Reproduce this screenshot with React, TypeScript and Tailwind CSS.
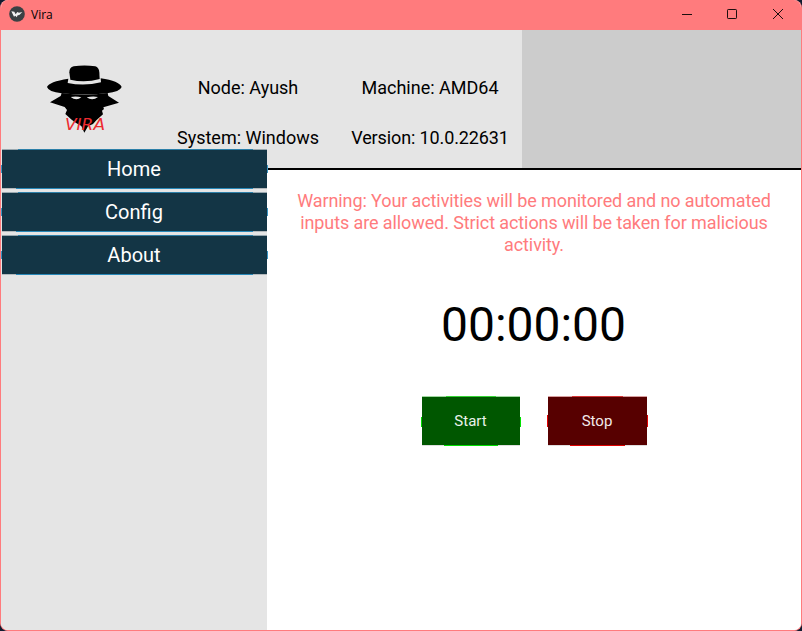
import React from "react";

const navItems = ["Home", "Config", "About"];

function KivyIcon() {
  return (
    <svg className="h-4 w-4" viewBox="0 0 48 48">
      <circle cx="24" cy="24" r="23.5" fill="#3b4144" />
      <path d="M7 16 L16 17 L20 25 L25 18 L30 20 L40 18 L31 27 L26 28 L23 34 L19 29 L15 32 Z" fill="#f2f2f2" />
    </svg>
  );
}

function SpyLogo() {
  return (
    <svg className="block h-[90px] w-[100px]" viewBox="0 0 300 270">
      <path d="M106 74 L103 52 Q103 37 116 34 Q148 29 181 34 Q192 38 193 52 L194 72 Q150 84 106 74 Z" />
      <path d="M36 96 Q42 80 100 71 L98 84 Q148 94 198 82 L197 70 Q253 78 260 96 Q255 110 215 115 Q148 122 80 115 Q40 110 36 96 Z" />
      <path d="M80 114 Q148 124 218 114 L220 123 L252 143 L205 157 L207 162 L201 167 L204 178 L184 196 L174 207 L159 214 L148 233 L139 213 L122 203 L110 194 L91 177 L96 165 L89 156 L45 142 L77 123 Z" />
      <path d="M107 126 Q124 123 139 127 Q124 139 107 126 Z M155 127 Q173 123 189 126 Q172 139 155 127 Z" fill="#e5e5e5" />
      <text x="90" y="226" textLength="120" lengthAdjust="spacingAndGlyphs" className="font-['DejaVu_Sans',sans-serif] text-[46px] italic" fill="#ed2b30">VIRA</text>
    </svg>
  );
}

function NavButton({ label }: { label: string }) {
  return (
    <button className="relative flex h-10 w-full shrink-0 items-center justify-center bg-[#133545] pr-px pb-px text-[20px] leading-6 text-white">
      <span className="absolute top-0 right-0 left-0 h-px bg-[#9aa8af]" />
      <span className="absolute top-0 right-3.5 left-4 h-px bg-[#2c7fa8]" />
      <span className="absolute right-3.5 bottom-0 left-3.5 h-px bg-[#2788b8]" />
      <span className="absolute bottom-0 left-0 h-px w-3.5 bg-[#b4b9bc]" />
      <span className="absolute right-0 bottom-0 h-px w-3.5 bg-[#b4b9bc]" />
      <span className="absolute top-4 -left-px h-2 w-px bg-[#3894c2]" />
      <span className="absolute top-4 -right-px h-2 w-px bg-[#3894c2]" />
      {label}
    </button>
  );
}

export default function App() {
  return (
    <div className="h-[631px] w-[802px] overflow-hidden bg-[#101c30] font-[Roboto,sans-serif]">
      <div className="flex h-full w-full flex-col overflow-hidden rounded-lg border-x border-b border-[#ff7b7d] bg-white">
        <header className="flex h-[30px] shrink-0 items-center justify-between bg-[#ff7b7d]">
          <div className="flex items-center gap-1.5 pb-0.5 pl-2">
            <KivyIcon />
            <span className="pt-0.5 font-['Open_Sans',sans-serif] text-[12px] leading-4 text-black">Vira</span>
          </div>
          <svg className="h-[30px] w-[142px]" viewBox="0 0 142 30" fill="none" stroke="#1c0e0e" shapeRendering="geometricPrecision">
            <path d="M23 14.5h10" />
            <rect x="68.5" y="9.5" width="9" height="9" rx="0.7" />
            <path d="M114 9l10 10M124 9l-10 10" />
          </svg>
        </header>

        <section className="flex h-[140px] shrink-0 border-b-2 border-black bg-[#cccccc]">
          <div className="flex w-[521px] bg-[#e5e5e5]">
            <div className="w-[160px] shrink-0 pt-[25px] pl-[34px]"><SpyLogo /></div>
            <div className="grid w-[361px] grid-cols-[174px_190px] grid-rows-[50px_50px] pt-[33px] text-center text-[18px] leading-[50px] text-black">
              <span>Node: Ayush</span>
              <span>Machine: AMD64</span>
              <span>System: Windows</span>
              <span className="tracking-[-0.12px]">Version: 10.0.22631</span>
            </div>
          </div>
        </section>

        <div className="flex min-h-0 flex-1">
          <aside className="w-[266px] shrink-0 bg-[#e5e5e5]">
            <nav className="relative mt-[-21px] ml-px flex flex-col gap-[3px]">
              {navItems.map((item) => <NavButton key={item} label={item} />)}
            </nav>
          </aside>
          <main className="flex flex-1 flex-col items-center bg-white pt-5">
            <p className="text-center text-[18px] leading-[22px] tracking-[-0.1px] text-[#ff7b7d]">
              Warning: Your activities will be monitored and no automated<br />
              inputs are allowed. Strict actions will be taken for malicious<br />
              activity.
            </p>
            <div className="mt-[41px] pr-px text-[48px] leading-[56px] text-black">00:00:00</div>
            <div className="mt-11 flex gap-7">
              <button className="relative h-12 w-[98px] bg-[#005700] text-[15px] text-[#eaf2ea]">
                <span className="absolute -top-px left-0 h-px w-full bg-[#9fd89f]" />
                <span className="absolute -top-px right-6 left-6 h-px bg-[#35d535]" />
                <span className="absolute bottom-[-1px] left-0 h-px w-full bg-[#dedede]" />
                <span className="absolute right-[22px] bottom-[-1px] left-[22px] h-px bg-[#00e000]" />
                <span className="absolute top-5 -left-px h-2.5 w-px bg-[#00e000]" />
                <span className="absolute top-5 -right-px h-2.5 w-px bg-[#00e000]" />
                Start
              </button>
              <button className="relative h-12 w-[99px] bg-[#570000] text-[15px] text-[#f2eaea]">
                <span className="absolute -top-px left-0 h-px w-full bg-[#d89f9f]" />
                <span className="absolute -top-px right-6 left-6 h-px bg-[#d53535]" />
                <span className="absolute bottom-[-1px] left-0 h-px w-full bg-[#dedede]" />
                <span className="absolute right-[22px] bottom-[-1px] left-[22px] h-px bg-[#e00000]" />
                <span className="absolute top-[18px] -left-px h-3 w-px bg-[#e00000]" />
                <span className="absolute top-[18px] -right-px h-3 w-px bg-[#e00000]" />
                Stop
              </button>
            </div>
          </main>
        </div>
      </div>
    </div>
  );
}
